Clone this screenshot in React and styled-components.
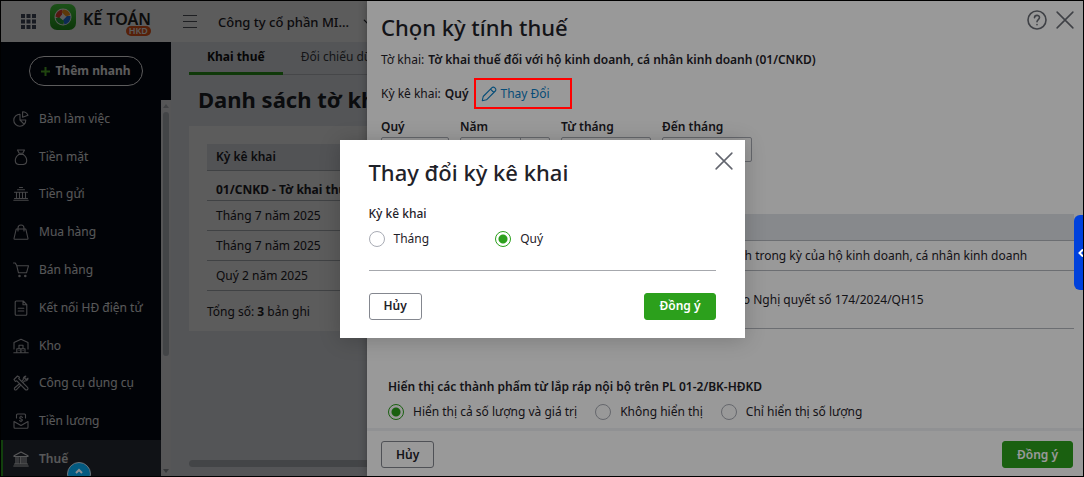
import React from "react";
import styled, { createGlobalStyle, css } from "styled-components";

const Global = createGlobalStyle`
  *, *::before, *::after { box-sizing: border-box; }
  body { margin: 0; }
  body, button, select, input { font-family: "Noto Sans", "Liberation Sans", sans-serif; font-size: 12px; line-height: 18px; }
  h1, h2, p, fieldset { margin: 0; padding: 0; border: 0; }
  button { cursor: pointer; }
`;

const Frame = styled.div`
  position: relative;
  height: 100vh;
  border: 1px solid #000;
  overflow: hidden;
  background: #e9edf3;
  color: #1f2229;
`;

/* ---------- application shell ---------- */
const Shell = styled.div`
  height: 100%;
  display: flex;
  flex-direction: column;
`;
const TopBar = styled.header`
  flex: none;
  height: 41px;
  display: flex;
  align-items: center;
  padding-left: 20px;
  background: #fff;
`;
const IconButton = styled.button`
  display: grid;
  place-items: center;
  padding: 0;
  border: 0;
  background: none;
  color: inherit;
`;
const MenuToggle = styled(IconButton)`
  margin-left: 32px;
`;
const Brand = styled.a`
  flex: none;
  align-self: flex-start;
  display: flex;
  gap: 7px;
  margin: 3px 0 0 14px;
  width: 101px;
  color: #222;
  text-decoration: none;
  svg { flex: none; }
`;
const BrandText = styled.span`
  position: relative;
  margin-top: 3px;
  font: 600 16px/24px "Noto Sans", sans-serif;
  white-space: nowrap;
`;
const BrandTag = styled.span`
  position: absolute;
  right: 0;
  top: 19px;
  padding: 0 3px;
  border-radius: 5px;
  background: #f05a1a;
  color: #fff;
  font-size: 9px;
  font-weight: 600;
  line-height: 10px;
`;
const Company = styled.button`
  display: flex;
  align-items: center;
  gap: 14px;
  margin-left: 21px;
  padding: 0;
  border: 0;
  background: none;
  color: #1f2229;
  font-size: 13px;
  font-weight: 500;
  white-space: nowrap;
`;
const Columns = styled.div`
  flex: 1;
  min-height: 0;
  display: flex;
`;
const Sidebar = styled.aside`
  flex: none;
  width: 170px;
  display: flex;
  flex-direction: column;
  background: #060916;
`;
const QuickAdd = styled.button`
  flex: none;
  align-self: center;
  width: 114px;
  height: 30px;
  margin: 14px 0;
  border: 1px solid #fff;
  border-radius: 15px;
  background: none;
  color: #fff;
  font-size: 12px;
  font-weight: 700;
  display: flex;
  align-items: center;
  justify-content: center;
  gap: 5px;
`;
const MenuArea = styled.div`
  flex: 1;
  min-height: 0;
  display: flex;
  overflow: hidden;
`;
const Menu = styled.nav`
  flex: 1;
  height: 378px;
  display: grid;
  grid-auto-rows: 1fr;
`;
const MenuItem = styled.a`
  display: flex;
  align-items: center;
  gap: 10px;
  padding-left: ${(p) => (p.$active ? 10 : 12)}px;
  border-left: ${(p) => (p.$active ? "2px solid #34b526" : "0")};
  background: ${(p) => (p.$active ? "#30333f" : "none")};
  color: #f4f5f7;
  font-weight: ${(p) => (p.$active ? 600 : 400)};
  text-decoration: none;
  white-space: nowrap;
`;
const Track = styled.div`
  width: 10px;
  display: flex;
  flex-direction: column;
  align-items: center;
  justify-content: space-between;
  padding: 4px 2px 3px 2px;
  background: #eef0f2;
`;
const Arrow = styled.span`
  border: 3px solid transparent;
  border-top: ${(p) => (p.$down ? "4px solid #9b9ea5" : "0")};
  border-bottom: ${(p) => (p.$down ? "0" : "4px solid #b6b9bf")};
`;
const Thumb = styled.div`
  width: 6px;
  height: 66%;
  margin-bottom: auto;
  margin-top: 4px;
  border-radius: 3px;
  background: #bcc0c7;
`;
const Main = styled.main`
  flex: 1;
  min-width: 0;
  display: flex;
  flex-direction: column;
  padding-left: 18px;
`;
const Tabs = styled.div`
  flex: none;
  display: flex;
  height: 33px;
  border-bottom: 1px solid #c3c7ce;
`;
const Tab = styled.a`
  height: 33px;
  padding: 6px 18px 0;
  border-bottom: ${(p) => (p.$active ? "3px solid #2ca01c" : "0")};
  color: ${(p) => (p.$active ? "#111" : "#3a3d44")};
  font-weight: ${(p) => (p.$active ? 700 : 400)};
  text-decoration: none;
`;
const PageTitle = styled.h1`
  margin: 9px 0 12px 9px;
  font-size: 22px;
  font-weight: 700;
  line-height: 30px;
  white-space: nowrap;
`;
const Card = styled.section`
  padding: 18px 18px 10px;
  background: #fff;
`;
const ReturnsTable = styled.table`
  width: 100%;
  border-collapse: separate;
  border-spacing: 0;
  th, td {
    height: 30px;
    padding: 0 9px;
    border-bottom: 1px solid #b4b7be;
    text-align: left;
    font-weight: 400;
    white-space: nowrap;
  }
  thead th { height: 27px; background: #e4e7ed; font-weight: 600; }
  tbody th { padding-top: 8px; font-weight: 700; }
`;
const Total = styled.p`
  margin-top: 12px;
`;
const PageScroll = styled.div`
  flex: none;
  height: 7px;
  margin: auto 0 9px;
  border-radius: 4px;
  background: #bcc0c7;
`;

/* ---------- overlays ---------- */
const Shade = styled.div`
  position: absolute;
  inset: 0;
  z-index: ${(p) => p.$level};
  background: rgba(0, 0, 0, 0.4);
`;
const Drawer = styled.section`
  position: absolute;
  z-index: 2;
  top: 0;
  right: 0;
  bottom: 0;
  width: min(716px, 100%);
  display: flex;
  flex-direction: column;
  background: #fff;
  box-shadow: 0 0 8px rgba(0, 0, 0, 0.3);
`;
const DrawerBody = styled.div`
  flex: 1;
  min-height: 0;
  padding: 11px 9px 0 14px;
`;
const DrawerHead = styled.div`
  display: flex;
  justify-content: space-between;
`;
const HeadActions = styled.div`
  display: flex;
  align-items: center;
  gap: 9px;
  height: 16px;
  color: #6a6d75;
`;
const Title = styled.h2`
  font-size: 22px;
  font-weight: 500;
  line-height: 30px;
`;
const Line = styled.p`
  display: flex;
  gap: 4px;
  margin-top: ${(p) => p.$gap}px;
  b { font-weight: 600; }
`;
const ChangeLink = styled.button`
  display: flex;
  align-items: center;
  gap: 4px;
  margin-left: 8px;
  padding: 0;
  border: 0;
  background: none;
  color: #0a80c8;
`;
const Fields = styled.div`
  display: flex;
  gap: 11px;
  margin-top: 15px;
`;
const Field = styled.label`
  width: ${(p) => p.$w}px;
  font-weight: 600;
`;
const Select = styled.select`
  display: block;
  width: 100%;
  height: 25px;
  margin-top: 1px;
  padding: 0 8px;
  appearance: none;
  border: 1px solid #a9acb5;
  border-radius: 2px;
  background: ${(p) => (p.$split ? "linear-gradient(#a9acb5, #a9acb5) right 28px top / 1px 100% no-repeat #fff" : "#fff")};
  color: #1f2229;
`;
const FormsTable = styled.table`
  width: calc(100% - 7px);
  margin: 52px 0 0 7px;
  border-collapse: separate;
  border-spacing: 0;
  th, td {
    padding: 0 8px;
    border-bottom: 1px solid #b4b7be;
    text-align: left;
    white-space: nowrap;
  }
  th { height: 27px; background: #e2e4ea; font-weight: 600; }
  td { height: 30px; }
  tr:last-child td { height: 58px; }
  th:first-child { width: 138px; }
`;
const RadioGroup = styled.fieldset`
  margin: ${(p) => p.$margin};
  legend { padding: 0; font-weight: ${(p) => p.$weight}; }
`;
const RadioRow = styled.div`
  display: flex;
  gap: ${(p) => p.$gap}px;
  margin-top: 8px;
`;
const RadioLabel = styled.label`
  display: flex;
  align-items: center;
  gap: 9px;
  height: 16px;
`;
const Radio = styled.input.attrs({ type: "radio" })`
  appearance: none;
  width: 16px;
  height: 16px;
  margin: 0;
  border: 1px solid #a9acb5;
  border-radius: 50%;
  background: #fff;
  &:checked {
    border-color: #2ca01c;
    background: radial-gradient(circle, #2ca01c 4px, #fff 5px);
  }
`;
const DrawerFoot = styled.footer`
  flex: none;
  display: flex;
  justify-content: space-between;
  padding: 10px 10px 8px 14px;
  border-top: 3px solid #f0f2f5;
`;
const Button = styled.button`
  height: 27px;
  padding: 0 14px;
  border: 1px solid #84878f;
  border-radius: 3px;
  background: #fff;
  color: #1f2229;
  font-weight: 600;
  ${(p) =>
    p.$primary &&
    css`
      border-color: #2ca01c;
      background: #2ca01c;
      color: #fff;
    `}
`;
const Center = styled.div`
  position: absolute;
  inset: 0;
  z-index: 4;
  display: grid;
  place-items: center;
`;
const Dialog = styled.section`
  position: relative;
  width: min(405px, 100%);
  padding: 17px 29px 18px;
  background: #fff;
  box-shadow: 0 2px 20px rgba(0, 0, 0, 0.2);
`;
const DialogClose = styled(IconButton)`
  position: absolute;
  top: 12px;
  right: 12px;
  color: #62656e;
`;
const DialogFoot = styled.footer`
  display: flex;
  justify-content: space-between;
  margin-top: 23px;
  padding-top: 22px;
  border-top: 1px solid #a6a8ad;
`;
const Highlight = styled.div`
  position: absolute;
  z-index: 4;
  top: 77px;
  right: 511px;
  width: 98px;
  height: 31px;
  border: 2px solid #fe0000;
`;
const SideTab = styled.button`
  position: absolute;
  z-index: 4;
  top: 214px;
  right: 0;
  width: 9px;
  height: 75px;
  padding: 0;
  overflow: hidden;
  border: 0;
  border-radius: 6px 0 0 6px;
  background: #0041dc;
  color: #fff;
  display: flex;
  align-items: center;
  justify-content: flex-end;
`;
const UpButton = styled.button`
  position: absolute;
  z-index: 4;
  left: 66px;
  bottom: -10px;
  width: 24px;
  height: 24px;
  padding: 0 0 6px;
  border: 1px solid #6d7277;
  border-radius: 50%;
  background: #035a80;
  color: #8b9094;
  display: grid;
  place-items: center;
`;

/* ---------- icons ---------- */
const Svg = ({ size = 16, children, sw = 1.1, ...rest }) => (
  <svg width={size} height={size} viewBox="0 0 16 16" fill="none" stroke="currentColor" strokeWidth={sw} strokeLinecap="round" strokeLinejoin="round" aria-hidden="true" {...rest}>
    {children}
  </svg>
);
const Close = () => (
  <Svg size={18} sw={1.4}><path d="M1 1l14 14M15 1L1 15" /></Svg>
);
const icons = {
  pie: <path d="M7 3.2A6 6 0 1 0 12.800 9H7zM9.600.8v5.400L15 4.300A6 6 0 0 0 9.600.8zM7 9l4 4.200" />,
  bag: <path d="M4.500 1h7l-1.700 3.200H6.200zM5.300 5.500h5.400M5.800 5.600C3.300 7.200 2.300 9.200 2.300 11.500c0 2.600 1.700 4 4 4h3.400c2.300 0 4-1.400 4-4 0-2.300-1-4.300-3.500-5.900" />,
  bank: <path d="M6.500 1.500h3M4.500 3.800h7M1.500 6.200h13M3.500 6.500v6M6.500 6.500v6M9.500 6.500v6M12.500 6.500v6M1.500 12.500h13M.8 14.200h14.400" />,
  shop: <path d="M3.200 5h9.600L15 14.500a.8.8 0 0 1-.8.8H1.800a.8.8 0 0 1-.8-.8zM5 7V4a3 3 0 0 1 6 0v3" />,
  cart: <g><path d="M.5 1h1.800l1.500 2.800 1.700 7h8l2-7H3.800" /><circle cx="6.500" cy="14" r=".7" fill="currentColor" /><circle cx="12.300" cy="14" r=".7" fill="currentColor" /></g>,
  doc: <path d="M3.200 1h7l3.600 3.600v9.600a1 1 0 0 1-1 1H3.200a1 1 0 0 1-1-1V2a1 1 0 0 1 1-1zM10 1.200V4.800h3.600M5.200 8.200h5.600M5.200 11h5.600" />,
  house: <path d="M1 11V4.500L8 1.300l7 3.200V11M.8 14.800h14.400M3.800 14.500v-3.800h4v3.800M8 14.500v-3.800h4v3.800M6 10.500V7.200h4v3.300M6 12.500h.1M10 12.500h.1" />,
  tools: <path d="M1 4.500L4.500 1l2 1.200-.8 1.300 8.800 8.800a1.500 1.500 0 0 1-2.200 2.200L3.800 5.800l-1.400.7zM9.300 5.600l1-1c-.3-1.800.7-3.300 2.500-3.500L11.500 3l1.500 1.500 2-1.300c0 2-1.500 3-3.400 2.700l-1 1M6.800 8.500L1.500 13c-.6 1.400.5 2.400 1.800 1.800L8 9.800" />,
  pay: <path d="M3.500 5V2a1 1 0 0 1 1-1h7a1 1 0 0 1 1 1v3M1 8.500v5.700a1 1 0 0 0 1 1h12a1 1 0 0 0 1-1V8.500L8 12.500zM9.500 4.300C8.500 3.400 6.700 3.700 6.800 4.900c0 1.200 2.600.9 2.600 2.200 0 1.200-2 1.300-2.900.5M8 3v.5M8 8v.6" />,
  tax: <path d="M1 4.800L8 1l7 3.800v.7H1zM1.500 13h13M.8 15h14.400M3 6v6.800M5 6v6.800M7.300 6v6.800M9 6v6.800M11 6v6.800M13 6v6.800" />,
};
const menu = [
  ["pie", "Bàn làm việc"],
  ["bag", "Tiền mặt"],
  ["bank", "Tiền gửi"],
  ["shop", "Mua hàng"],
  ["cart", "Bán hàng"],
  ["doc", "Kết nối HĐ điện tử"],
  ["house", "Kho"],
  ["tools", "Công cụ dụng cụ"],
  ["pay", "Tiền lương"],
  ["tax", "Thuế"],
];

const Logo = () => (
  <svg width="26" height="26" viewBox="0 0 26 26" aria-hidden="true">
    <defs>
      <linearGradient id="leaf" x1="0" y1="0" x2="0" y2="1">
        <stop offset="0" stopColor="#4fe045" />
        <stop offset="1" stopColor="#239a1d" />
      </linearGradient>
    </defs>
    <rect width="26" height="26" rx="7" fill="url(#leaf)" />
    <circle cx="13" cy="13" r="8.500" fill="#fff" />
    <path d="M12.500 5.500A7.500 7.500 0 0 0 5.500 12.500L9 14.500 12 10.500z" fill="#ef4136" />
    <path d="M13.500 5.500A7.500 7.500 0 0 1 20.300 11L16 12.500 11.500 8z" fill="#ff9d1e" />
    <path d="M20.500 12A7.500 7.500 0 0 1 14.500 20.400L13 16 17 12z" fill="#2577e8" />
    <path d="M13.500 20.500A7.500 7.500 0 0 1 5.600 14L9.500 13.500 14 17z" fill="#2fb344" />
    <rect x="11" y="11" width="4" height="4" fill="#fff" transform="rotate(45 13 13)" />
  </svg>
);

export default function App() {
  return (
    <>
      <Global />
      <Frame>
        <Shell>
          <TopBar>
            <IconButton aria-label="Ứng dụng">
              <svg width="15" height="15" viewBox="0 0 15 15" fill="#454c60" aria-hidden="true">
                {[0, 1, 2].map((r) => [0, 1, 2].map((c) => <rect key={`${r}${c}`} x={c * 5.5} y={r * 5.5} width="4" height="4" />))}
              </svg>
            </IconButton>
            <Brand href="#">
              <Logo />
              <BrandText>KẾ TOÁN<BrandTag>HKD</BrandTag></BrandText>
            </Brand>
            <MenuToggle aria-label="Thu gọn menu">
              <svg width="14" height="13" viewBox="0 0 14 13" stroke="#555961" strokeWidth="1" aria-hidden="true"><path d="M0 .5h14M0 6.500h14M0 12.500h14" /></svg>
            </MenuToggle>
            <Company>
              Công ty cổ phần MI...
              <Svg size={10} sw={2}><path d="M2 5l6 6 6-6" /></Svg>
            </Company>
          </TopBar>
          <Columns>
            <Sidebar>
              <QuickAdd>
                <svg width="9" height="9" viewBox="0 0 9 9" stroke="#5bc22c" strokeWidth="2" aria-hidden="true"><path d="M4.500 0v9M0 4.500h9" /></svg>
                Thêm nhanh
              </QuickAdd>
              <MenuArea>
                <Menu>
                  {menu.map(([icon, label]) => (
                    <MenuItem key={label} href="#" $active={label === "Thuế"}>
                      <Svg opacity={label === "Thuế" ? 1 : 0.8}>{icons[icon]}</Svg>
                      {label}
                    </MenuItem>
                  ))}
                </Menu>
                <Track><Arrow /><Thumb /><Arrow $down /></Track>
              </MenuArea>
            </Sidebar>
            <Main>
              <Tabs>
                <Tab href="#" $active>Khai thuế</Tab>
                <Tab href="#">Đối chiếu dữ liệu</Tab>
              </Tabs>
              <PageTitle>Danh sách tờ khai thuế</PageTitle>
              <Card>
                <ReturnsTable>
                  <thead><tr><th>Kỳ kê khai</th></tr></thead>
                  <tbody>
                    <tr><th>01/CNKD - Tờ khai thuế đối với hộ kinh doanh</th></tr>
                    <tr><td>Tháng 7 năm 2025</td></tr>
                    <tr><td>Tháng 7 năm 2025</td></tr>
                    <tr><td>Quý 2 năm 2025</td></tr>
                  </tbody>
                </ReturnsTable>
                <Total>Tổng số: <b>3</b> bản ghi</Total>
              </Card>
              <PageScroll />
            </Main>
          </Columns>
        </Shell>

        <Shade $level={1} />

        <Drawer aria-label="Chọn kỳ tính thuế">
          <DrawerBody>
            <DrawerHead>
              <Title>Chọn kỳ tính thuế</Title>
              <HeadActions>
                <IconButton aria-label="Trợ giúp">
                  <svg width="20" height="20" viewBox="0 0 20 20" fill="none" stroke="currentColor" strokeWidth="1.600" strokeLinecap="round" aria-hidden="true">
                    <circle cx="10" cy="10" r="9" />
                    <path d="M7.500 7.800c0-3.300 5-3.200 5-.2 0 1.900-2.500 2-2.500 4.200M10 14.600v.2" />
                  </svg>
                </IconButton>
                <IconButton aria-label="Đóng"><Close /></IconButton>
              </HeadActions>
            </DrawerHead>
            <Line $gap={9}>Tờ khai: <b>Tờ khai thuế đối với hộ kinh doanh, cá nhân kinh doanh (01/CNKD)</b></Line>
            <Line as="div" $gap={16}>
              Kỳ kê khai: <b>Quý</b>
              <ChangeLink>
                <Svg><path d="M1.300 14.700l.9-4.200L11 1.700a1.800 1.800 0 0 1 2.600 0l.7.700a1.800 1.800 0 0 1 0 2.600L5.500 13.800zM9.500 3.200l3.300 3.300" /></Svg>
                Thay Đổi
              </ChangeLink>
            </Line>
            <Fields>
              <Field $w={68}>Quý<Select defaultValue="3"><option>3</option></Select></Field>
              <Field $w={90}>Năm<Select $split defaultValue="2025"><option>2025</option></Select></Field>
              <Field $w={90}>Từ tháng<Select defaultValue="7"><option>7</option></Select></Field>
              <Field $w={90}>Đến tháng<Select defaultValue="9"><option>9</option></Select></Field>
            </Fields>
            <FormsTable>
              <thead><tr><th>Mã phụ lục</th><th>Tên phụ lục</th></tr></thead>
              <tbody>
                <tr><td>01-2/BK-HĐKD</td><td>Phụ lục bảng kê hoạt động kinh doanh trong kỳ của hộ kinh doanh, cá nhân kinh doanh</td></tr>
                <tr><td>PL 174/2024</td><td>Phụ lục giảm thuế giá trị gia tăng theo Nghị quyết số 174/2024/QH15</td></tr>
              </tbody>
            </FormsTable>
            <RadioGroup $margin="49px 0 0 7px" $weight={600}>
              <legend>Hiển thị các thành phẩm từ lắp ráp nội bộ trên PL 01-2/BK-HĐKD</legend>
              <RadioRow $gap={18}>
                <RadioLabel><Radio name="display" defaultChecked />Hiển thị cả số lượng và giá trị</RadioLabel>
                <RadioLabel><Radio name="display" />Không hiển thị</RadioLabel>
                <RadioLabel><Radio name="display" />Chỉ hiển thị số lượng</RadioLabel>
              </RadioRow>
            </RadioGroup>
          </DrawerBody>
          <DrawerFoot>
            <Button>Hủy</Button>
            <Button $primary>Đồng ý</Button>
          </DrawerFoot>
        </Drawer>

        <Shade $level={3} />

        <Highlight />
        <Center>
          <Dialog role="dialog" aria-label="Thay đổi kỳ kê khai">
            <Title>Thay đổi kỳ kê khai</Title>
            <DialogClose aria-label="Đóng"><Close /></DialogClose>
            <RadioGroup $margin="18px 0 0" $weight={500}>
              <legend>Kỳ kê khai</legend>
              <RadioRow $gap={66}>
                <RadioLabel><Radio name="period" />Tháng</RadioLabel>
                <RadioLabel><Radio name="period" defaultChecked />Quý</RadioLabel>
              </RadioRow>
            </RadioGroup>
            <DialogFoot>
              <Button>Hủy</Button>
              <Button $primary>Đồng ý</Button>
            </DialogFoot>
          </Dialog>
        </Center>
        <SideTab aria-label="Mở bảng bên">
          <svg width="5" height="8" viewBox="0 0 5 8" fill="none" stroke="currentColor" strokeWidth="2" aria-hidden="true"><path d="M5 0.500L1.500 4 5 7.500" /></svg>
        </SideTab>
        <UpButton aria-label="Lên đầu trang">
          <svg width="8" height="6" viewBox="0 0 8 6" fill="none" stroke="currentColor" strokeWidth="2" aria-hidden="true"><path d="M1 5l3-3 3 3" /></svg>
        </UpButton>
      </Frame>
    </>
  );
}
